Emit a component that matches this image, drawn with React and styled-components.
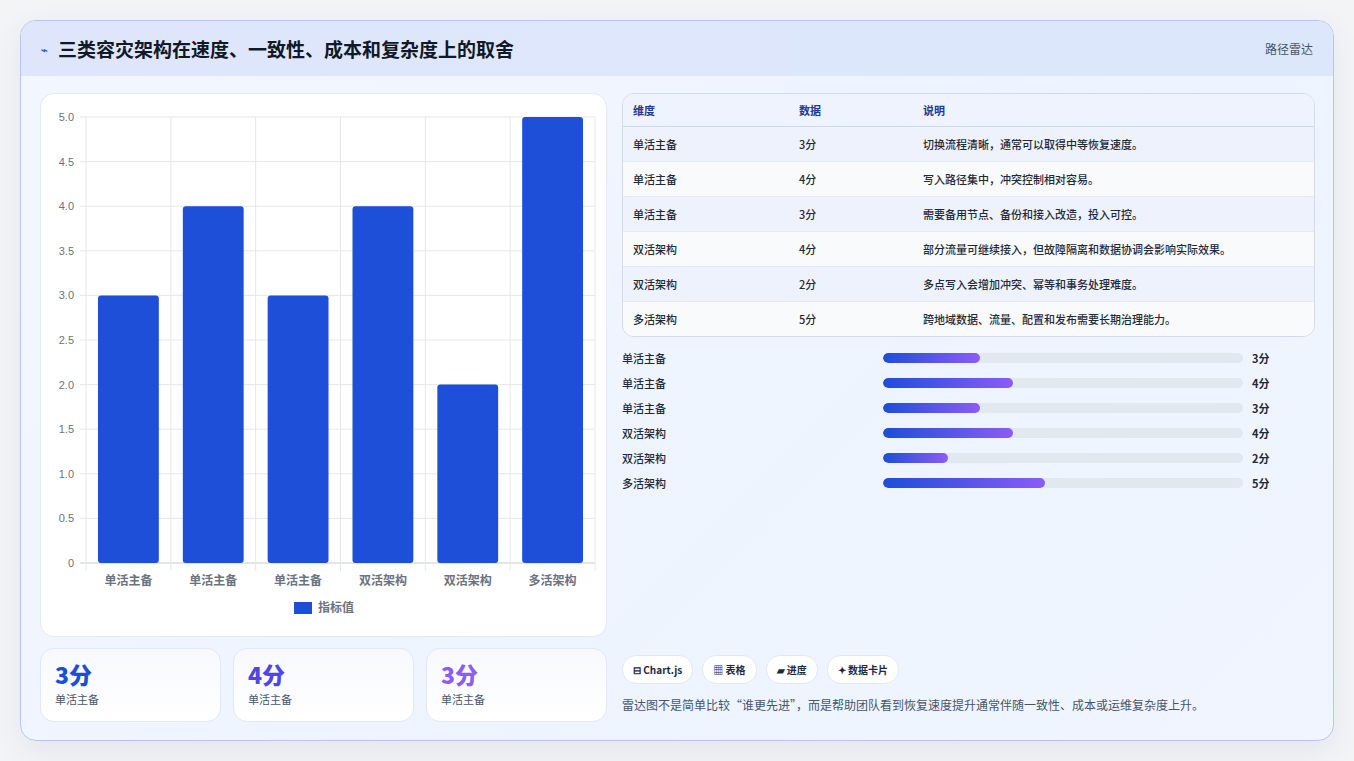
import React from "react";
import styled, { createGlobalStyle } from "styled-components";

const Global = createGlobalStyle`
  html, body { margin: 0; padding: 0; background: #f3f4f6; }
  body { font-family: "Noto Sans CJK SC", "Noto Sans", sans-serif; }
`;

const data = [
  ["单活主备", 3, "切换流程清晰，通常可以取得中等恢复速度。"],
  ["单活主备", 4, "写入路径集中，冲突控制相对容易。"],
  ["单活主备", 3, "需要备用节点、备份和接入改造，投入可控。"],
  ["双活架构", 4, "部分流量可继续接入，但故障隔离和数据协调会影响实际效果。"],
  ["双活架构", 2, "多点写入会增加冲突、幂等和事务处理难度。"],
  ["多活架构", 5, "跨地域数据、流量、配置和发布需要长期治理能力。"],
];

const Page = styled.div`
  width: 1354px; height: 761px; box-sizing: border-box;
  padding: 20px 20px 20px 20px;
`;
const Card = styled.div`
  width: 1314px; height: 721px; box-sizing: border-box;
  border: 1px solid #b7c6ee; border-radius: 16px; overflow: hidden;
  background: linear-gradient(135deg, #f2f6ff 0%, #eef4fe 60%, #f0f5ff 100%);
  box-shadow: 0 10px 30px rgba(30,60,140,0.08);
  display: flex; flex-direction: column;
`;
const Header = styled.div`
  height: 55px; flex: none; background: linear-gradient(90deg, #dfe6fc, #dce7fb);
  display: flex; align-items: center; justify-content: space-between; padding: 0 20px;
`;
const Title = styled.h1`
  margin: 0; font-size: 19px; font-weight: 700; color: #111827;
  display: flex; align-items: center; gap: 10px;
`;
const Bolt = styled.span` color: #2563eb; font-size: 11px; `;
const Tag = styled.span` font-size: 12px; color: #475569; `;
const Body = styled.div`
  flex: 1; display: grid; grid-template-columns: 567px 693px; gap: 15px;
  padding: 17px 19px 18px 19px;
`;
const Left = styled.div` display: flex; flex-direction: column; gap: 11px; `;
const ChartCard = styled.div`
  height: 544px; box-sizing: border-box; background: #fff; border: 1px solid #e3e9f5;
  border-radius: 14px;
`;
const Stats = styled.div` display: grid; grid-template-columns: repeat(3, 1fr); gap: 12px; `;
const Stat = styled.div`
  height: 74px; box-sizing: border-box; border: 1px solid #e1e8f6; border-radius: 14px;
  background: linear-gradient(180deg, #f7f9ff, #ffffff); padding: 10px 14px;
`;
const StatNum = styled.div`
  font-size: 23px; font-weight: 800; color: ${p => p.c}; line-height: 30px;
`;
const StatLabel = styled.div` font-size: 11px; color: #475569; margin-top: 2px; `;
const Right = styled.div` display: flex; flex-direction: column; `;
const Table = styled.div`
  border: 1px solid #d4dcec; border-radius: 12px; overflow: hidden; background: #f8fafc;
`;
const Row = styled.div`
  display: grid; grid-template-columns: 166px 124px 1fr; align-items: center;
  height: ${p => (p.head ? 32 : 34)}px; padding-left: 10px; font-size: 11px;
  color: ${p => (p.head ? "#1e3a8a" : "#1f2937")};
  font-weight: ${p => (p.head ? 600 : 500)};
  background: ${p => (p.head ? "#eef3fd" : p.odd ? "#eef2fd" : "#f8fafc")};
  border-bottom: 1px solid ${p => (p.head ? "#cfd9ec" : "#e5eaf3")};
  &:last-child { border-bottom: none; }
`;
const Bars = styled.div` display: flex; flex-direction: column; gap: 7px; margin-top: 12px; `;
const BarRow = styled.div`
  display: grid; grid-template-columns: 261px 360px 1fr; align-items: center; gap: 0;
  height: 18px; font-size: 11px; color: #1f2937; font-weight: 500;
`;
const Track = styled.div` height: 10px; border-radius: 5px; background: #e2e8f0; overflow: hidden; `;
const Fill = styled.div`
  height: 100%; border-radius: 5px; background: linear-gradient(90deg, #1d4ed8, #8b5cf6);
`;
const Val = styled.span` padding-left: 9px; font-weight: 700; color: #1f2937; `;
const Bottom = styled.div` margin-top: auto; padding-bottom: 9px; `;
const Chips = styled.div` display: flex; gap: 9px; `;
const Chip = styled.span`
  height: 27px; padding: 0 10px; border-radius: 14px; background: #fff; border: 1px solid #e3e8f2;
  font-size: 10px; font-weight: 600; color: #1f2937; display: inline-flex; align-items: center; gap: 4px;
`;
const Note = styled.p` margin: 12px 0 0; font-size: 12px; color: #475569; `;

function Chart() {
  const x0 = 45, x1 = 554, y0 = 469, y1 = 23;
  const cw = (x1 - x0) / 6, u = (y0 - y1) / 5;
  const ticks = [0, 0.5, 1, 1.5, 2, 2.5, 3, 3.5, 4, 4.5, 5];
  return (
    <svg width="565" height="542" style={{ display: "block" }}>
      {ticks.map(t => (
        <g key={t}>
          <line x1={x0 - 6} x2={x1} y1={y0 - t * u} y2={y0 - t * u} stroke={t === 0 ? "#c6cbd6" : "#e5e7eb"} />
          <text x={x0 - 12} y={y0 - t * u + 4} fontSize="11" fill="#6b7280" textAnchor="end" fontFamily="Liberation Sans, sans-serif">{t === 0 ? "0" : t.toFixed(1)}</text>
        </g>
      ))}
      {[0, 1, 2, 3, 4, 5, 6].map(i => (
        <line key={i} x1={x0 + i * cw} x2={x0 + i * cw} y1={y1} y2={y0 + 8} stroke="#e5e7eb" />
      ))}
      {data.map((d, i) => (
        <g key={i}>
          <rect x={x0 + i * cw + 12} y={y0 - d[1] * u} width={cw - 24} height={d[1] * u} rx="3" fill="#1d4fd8" />
          <text x={x0 + i * cw + cw / 2} y={491} fontSize="12" fill="#6b7280" textAnchor="middle" fontWeight="600">{d[0]}</text>
        </g>
      ))}
      <rect x="253" y="508" width="18" height="12" fill="#1d4fd8" />
      <text x="277" y="518" fontSize="12" fill="#6b7280" fontWeight="600">指标值</text>
    </svg>
  );
}

export default function App() {
  const colors = ["#1d4ed8", "#4f46e5", "#8b5cf6"];
  return (
    <Page>
      <Global />
      <Card>
        <Header>
          <Title><Bolt>⌁</Bolt>三类容灾架构在速度、一致性、成本和复杂度上的取舍</Title>
          <Tag>路径雷达</Tag>
        </Header>
        <Body>
          <Left>
            <ChartCard><Chart /></ChartCard>
            <Stats>
              {data.slice(0, 3).map((d, i) => (
                <Stat key={i}>
                  <StatNum c={colors[i]}>{d[1]}分</StatNum>
                  <StatLabel>{d[0]}</StatLabel>
                </Stat>
              ))}
            </Stats>
          </Left>
          <Right>
            <Table>
              <Row head><span>维度</span><span>数据</span><span>说明</span></Row>
              {data.map((d, i) => (
                <Row key={i} odd={i % 2 === 0}><span>{d[0]}</span><span>{d[1]}分</span><span>{d[2]}</span></Row>
              ))}
            </Table>
            <Bars>
              {data.map((d, i) => (
                <BarRow key={i}>
                  <span>{d[0]}</span>
                  <Track><Fill style={{ width: `${d[1] * 9}%` }} /></Track>
                  <Val>{d[1]}分</Val>
                </BarRow>
              ))}
            </Bars>
            <Bottom>
              <Chips>
                <Chip>⊟ Chart.js</Chip>
                <Chip>▦ 表格</Chip>
                <Chip>▰ 进度</Chip>
                <Chip>✦ 数据卡片</Chip>
              </Chips>
              <Note>雷达图不是简单比较“谁更先进”，而是帮助团队看到恢复速度提升通常伴随一致性、成本或运维复杂度上升。</Note>
            </Bottom>
          </Right>
        </Body>
      </Card>
    </Page>
  );
}
